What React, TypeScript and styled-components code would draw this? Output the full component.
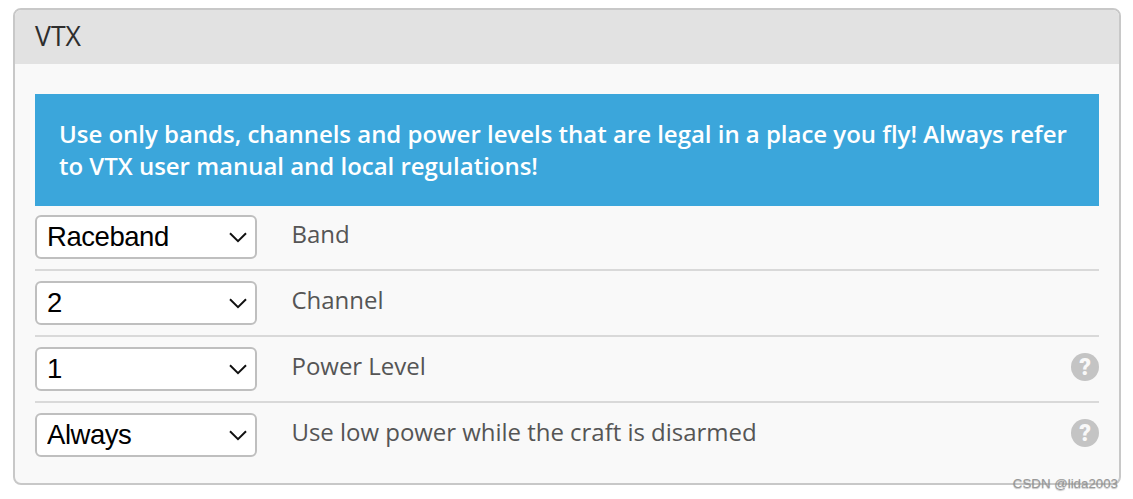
import React, { useState } from "react";
import styled, { createGlobalStyle } from "styled-components";

type Setting = {
  label: string;
  value: string;
  options: string[];
  help?: boolean;
};

const settings: Setting[] = [
  {
    label: "Band",
    value: "Raceband",
    options: ["Raceband"],
  },
  { label: "Channel", value: "2", options: ["1", "2", "3", "4", "5", "6", "7", "8"] },
  { label: "Power Level", value: "1", options: ["1", "2", "3"], help: true },
  {
    label: "Use low power while the craft is disarmed",
    value: "Always",
    options: ["Always"],
    help: true,
  },
];

function SettingRow({ label, value, options, help }: Setting) {
  const [selected, setSelected] = useState(value);

  return (
    <Row>
      <SelectBox>
        <Select
          aria-label={label}
          value={selected}
          onChange={(e) => setSelected(e.target.value)}
        >
          {options.map((option) => (
            <option key={option}>{option}</option>
          ))}
        </Select>
        <Chevron viewBox="0 0 20 12">
          <path d="M2 2.2 10 10.2 18 2.2" />
        </Chevron>
      </SelectBox>
      <Label>{label}</Label>
      {help && <Help>?</Help>}
    </Row>
  );
}

function App() {
  return (
    <>
      <GlobalStyle />
      <Page>
        <Panel>
          <Header>VTX</Header>
          <Content>
            <Warning>
              Use only bands, channels and power levels that are legal in a place
              you fly! Always refer to VTX user manual and local regulations!
            </Warning>
            {settings.map((setting) => (
              <SettingRow key={setting.label} {...setting} />
            ))}
          </Content>
        </Panel>
        <Watermark>CSDN @lida2003</Watermark>
      </Page>
    </>
  );
}

const GlobalStyle = createGlobalStyle`
  * {
    box-sizing: border-box;
  }
  body {
    margin: 0;
    background: #fff;
    font-family: "Open Sans", sans-serif;
    overflow: hidden;
  }
`;

const Page = styled.div`
  position: relative;
  height: 499px;
  padding: 8px 12px 14px 13px;
`;

const Panel = styled.section`
  height: 477px;
  border: 2px solid #c8c8c8;
  border-radius: 8px;
  background: #f9f9f9;
  overflow: hidden;
`;

const Header = styled.header`
  height: 54px;
  padding-left: 20px;
  background: #e2e2e2;
  color: #2e2e2e;
  font-size: 26.67px;
  font-weight: 450;
  line-height: 51px;
`;

const Content = styled.div`
  padding: 30px 20px 0;
`;

const Warning = styled.div`
  height: 112px;
  padding: 24px 24px;
  margin-bottom: -1px;
  background: #3ba6db;
  color: #fff;
  font-size: 24px;
  font-weight: 600;
  letter-spacing: -0.02px;
  line-height: 32px;
`;

const Row = styled.div`
  display: flex;
  align-items: center;
  height: 66px;
  border-bottom: 2px solid #d9d9d9;

  &:last-child {
    border-bottom-color: transparent;
  }
`;

//select and its arrow share one grid cell
const SelectBox = styled.div`
  display: grid;
  align-items: center;
  width: 222px;
  height: 44px;
`;

const Select = styled.select`
  grid-area: 1 / 1;
  width: 100%;
  height: 44px;
  padding: 0 40px 1px 10px;
  appearance: none;
  border: 2px solid #bfbfbf;
  border-radius: 6px;
  background: #fff;
  color: #000;
  font-family: "Liberation Sans", sans-serif;
  font-size: 27.5px;
  letter-spacing: -0.45px;
  outline: none;
`;

const Chevron = styled.svg`
  grid-area: 1 / 1;
  justify-self: end;
  width: 20px;
  height: 12px;
  margin-right: 9px;
  fill: none;
  stroke: #111;
  stroke-width: 2;
  pointer-events: none;
`;

const Label = styled.span`
  flex: 1;
  margin-left: 34.5px;
  padding-bottom: 7px;
  color: #555;
  font-size: 24px;
  letter-spacing: -0.03px;
  line-height: 32px;
`;

const Help = styled.span`
  width: 28px;
  height: 28px;
  margin-bottom: 4px;
  border-radius: 50%;
  background: #c4c4c4;
  color: #f9f9f9;
  font-family: "Roboto", sans-serif;
  font-size: 23px;
  font-weight: 900;
  line-height: 29px;
  text-align: center;
`;

const Watermark = styled.span`
  position: absolute;
  right: 15px;
  bottom: 7px;
  color: #999;
  font-family: "Liberation Sans", sans-serif;
  font-size: 13.3px;
  line-height: 16px;
  text-shadow: 0 1px 1px rgba(0, 0, 0, 0.25);
`;

export default App;
